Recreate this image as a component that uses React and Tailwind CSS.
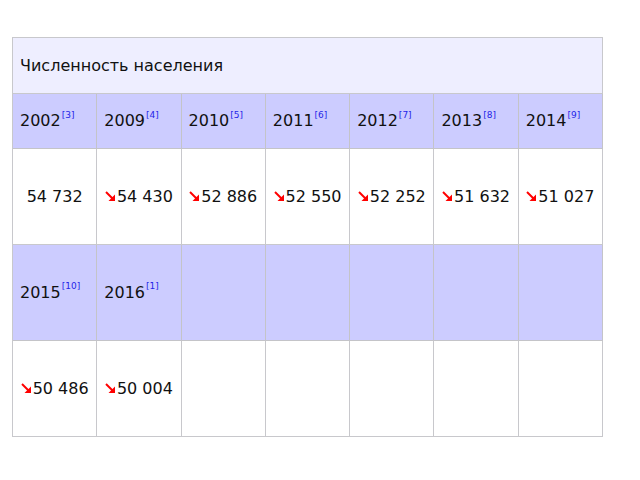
import React from "react";

const Arrow = () => (
  <svg width="11" height="11" viewBox="0 0 11 11" className="inline-block mr-[1px] align-[0px]">
    <line x1="1" y1="1" x2="7.5" y2="7.5" stroke="#ff0000" strokeWidth="2" />
    <polygon points="10,10 3.5,10 10,3.5" fill="#ff0000" />
  </svg>
);

const Head = ({ year, note, tall }) => (
  <div className={`bg-[#ccccff] border-r border-b border-[#c4c4c8] px-[7px] flex items-center ${tall ? "h-[96px]" : "h-[55px]"}`}>
    {year !== undefined && (
      <span>
        {year}
        <sup className="text-[9px] text-[#2525e8] align-[4px] ml-[1px]">[{note}]</sup>
      </span>
    )}
  </div>
);

const Val = ({ v, arrow }) => (
  <div className="bg-white border-r border-b border-[#c8c8cc] h-[96px] flex items-center justify-center">
    {v !== undefined && (
      <span>
        {arrow && <Arrow />}
        {v}
      </span>
    )}
  </div>
);

export default function App() {
  const h1 = [
    ["2002", "3"], ["2009", "4"], ["2010", "5"], ["2011", "6"], ["2012", "7"], ["2013", "8"], ["2014", "9"],
  ];
  const v1 = [
    ["54 732", false], ["54 430", true], ["52 886", true], ["52 550", true], ["52 252", true], ["51 632", true], ["51 027", true],
  ];
  return (
    <div className="w-[640px] h-[480px] bg-white pt-[37px] pl-[12px]" style={{ fontFamily: '"DejaVu Sans", sans-serif' }}>
      <div className="w-[591px] grid grid-cols-7 border-l border-t border-[#c8c8cc] text-[16px] text-[#111]">
        <div className="col-span-7 bg-[#eeeeff] border-r border-b border-[#c8c8cc] h-[56px] flex items-center px-[7px]">
          Численность населения
        </div>
        {h1.map(([y, n]) => (
          <Head key={y} year={y} note={n} />
        ))}
        {v1.map(([v, a], i) => (
          <Val key={i} v={v} arrow={a} />
        ))}
        <Head year="2015" note="10" tall />
        <Head year="2016" note="1" tall />
        <Head tall />
        <Head tall />
        <Head tall />
        <Head tall />
        <Head tall />
        <Val v="50 486" arrow />
        <Val v="50 004" arrow />
        <Val />
        <Val />
        <Val />
        <Val />
        <Val />
      </div>
    </div>
  );
}
